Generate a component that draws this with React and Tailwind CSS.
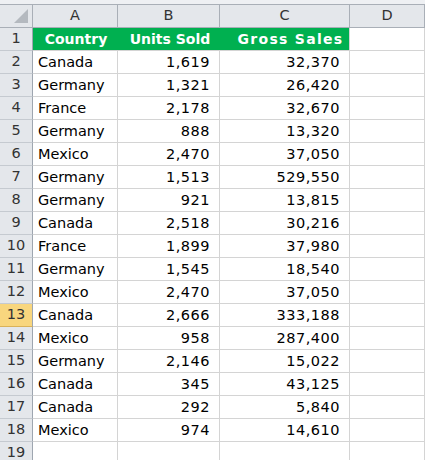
const rows = [
  ['Canada', '1,619', '32,370'],
  ['Germany', '1,321', '26,420'],
  ['France', '2,178', '32,670'],
  ['Germany', '888', '13,320'],
  ['Mexico', '2,470', '37,050'],
  ['Germany', '1,513', '529,550'],
  ['Germany', '921', '13,815'],
  ['Canada', '2,518', '30,216'],
  ['France', '1,899', '37,980'],
  ['Germany', '1,545', '18,540'],
  ['Mexico', '2,470', '37,050'],
  ['Canada', '2,666', '333,188'],
  ['Mexico', '958', '287,400'],
  ['Germany', '2,146', '15,022'],
  ['Canada', '345', '43,125'],
  ['Canada', '292', '5,840'],
  ['Mexico', '974', '14,610'],
]

const cols = 'grid grid-cols-[33px_85px_102px_130px_75px]'
const cell = 'h-[23px] border-r border-b border-[#d4d4d4] flex items-center'

const RowHead = ({ n, active }) => (
  <div
    className={`h-[23px] border-r border-b border-r-[#9ea6b0] flex items-center justify-center text-[#333] ${
      active ? 'bg-[#f8d67e] border-b-[#d9b25a]' : 'bg-[#e4e7eb] border-b-[#c5cad0]'
    }`}
  >
    {n}
  </div>
)

export default function App() {
  return (
    <div className="w-[425px] h-[460px] overflow-hidden bg-white text-[14.5px] text-black" style={{ fontFamily: '"DejaVu Sans", Verdana, sans-serif' }}>
      <div className="h-[4px] bg-[#eef0f3] border-b border-[#a9afb7] box-content" />
      <div className={`${cols} bg-[#e4e7eb] text-[#333]`}>
        <div className="relative h-[23px] border-r border-b border-[#a9afb7]">
          <div className="absolute right-[4px] bottom-[4px] w-0 h-0 border-l-[14px] border-l-transparent border-b-[14px] border-b-[#b4b9bf]" />
        </div>
        {['A', 'B', 'C', 'D'].map((l) => (
          <div key={l} className="h-[23px] border-r border-b border-[#a9afb7] flex items-center justify-center">
            {l}
          </div>
        ))}
      </div>
      <div className={cols}>
        <RowHead n={1} />
        <div className="h-[23px] border-b border-[#d4d4d4] bg-[#00b050] text-white font-bold text-[14px] flex items-center justify-center pl-[1px]">Country</div>
        <div className="h-[23px] border-b border-[#d4d4d4] bg-[#00b050] text-white font-bold text-[14px] flex items-center justify-center pl-[2px]">Units Sold</div>
        <div className="h-[23px] border-r border-b border-[#d4d4d4] bg-[#00b050] text-white font-bold text-[14px] tracking-[1.3px] flex items-center justify-center pl-[12px]">Gross Sales</div>
        <div className={cell} />
        {rows.map((r, i) => (
          <div key={i} className="contents">
            <RowHead n={i + 2} active={i + 2 === 13} />
            <div className={`${cell} pl-[5px] pt-[1px]`}>{r[0]}</div>
            <div className={`${cell} justify-end pr-[9px] pt-[1px] tracking-[0.5px]`}>{r[1]}</div>
            <div className={`${cell} justify-end pr-[9px] pt-[1px] tracking-[0.5px]`}>{r[2]}</div>
            <div className={cell} />
          </div>
        ))}
        <RowHead n={19} />
        <div className={cell} />
        <div className={cell} />
        <div className={cell} />
        <div className={cell} />
      </div>
    </div>
  )
}
